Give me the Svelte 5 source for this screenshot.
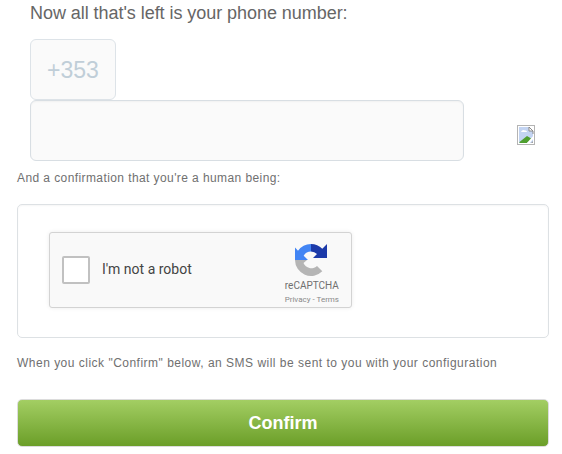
<script>
    let phone = "";
</script>

<div class="page">
    <h2 class="title">Now all that's left is your phone number:</h2>

    <div class="phone-group">
        <div class="prefix">+353</div>
        <div class="phone-row">
            <input class="phone-input" type="text" name="phone" bind:value={phone} />
            <svg class="broken-img" width="18" height="20" viewBox="0 0 18 20">
                <rect x="0.5" y="0.5" width="17" height="19" fill="#fff" stroke="#b4b4b4" />
                <path d="M2 2h10l4 4v12H2z" fill="#c3d4f2" />
                <path d="M4 7c.6-1.800 2.800-2.600 4-1.400 1.200 0 2 .7 2 1.400z" fill="#fff" />
                <path d="M2.500 18v-1l7.500-6 5 3-5 4z" fill="#4f9f2f" />
                <path d="M12 2v4h4z" fill="#fff" />
                <path d="M12 2v4h4M12 2l4 4v3" fill="none" stroke="#8a8a8a" />
                <path d="M9 19l8-9v3l-5 6z" fill="#fff" />
                <path d="M14 18l2-2v2z" fill="#a0a0a0" />
            </svg>
        </div>
    </div>

    <p class="note human">And a confirmation that you're a human being:</p>

    <div class="captcha-box">
        <div class="recaptcha">
            <span class="check"></span>
            <span class="robot">I'm not a robot</span>
            <div class="brand">
                <svg class="logo" width="32" height="32" viewBox="0 0 32 32">
                    <path d="M16 0a16 16 0 0 1 11.300 4.700L32 0v14H18l4-4a8.500 8.500 0 0 0-6-2.500z" fill="#1c3aa9" />
                    <path d="M16 0A16 16 0 0 0 3 6.800L0 3.500V16h13l-4.300-4.300A8.500 8.500 0 0 1 16 7.500z" fill="#4285f4" />
                    <path d="M0 16a16 16 0 0 0 27.300 11.300L22 22a8.500 8.500 0 0 1-13.500-3l3.500-3z" fill="#b5b5b5" />
                </svg>
                <span class="brand-name">reCAPTCHA</span>
                <span class="brand-links">Privacy - Terms</span>
            </div>
        </div>
    </div>

    <p class="note sms">When you click "Confirm" below, an SMS will be sent to you with your configuration</p>

    <button type="button" class="confirm">Confirm</button>
</div>

<style>
    :global(body) {
        margin: 0;
        background: #fff;
    }
    .page {
        width: 532px;
        padding: 0 13px 0 17px;
        font-family: "Liberation Sans", Arial, sans-serif;
    }
    .title {
        margin: 0;
        padding: 1px 0 0 13px;
        font-size: 18px;
        font-weight: normal;
        line-height: 24px;
        letter-spacing: -0.05px;
        color: #666;
    }
    .phone-group {
        margin-top: 14px;
        padding-left: 13px;
    }
    .prefix {
        box-sizing: border-box;
        width: 86px;
        height: 61px;
        line-height: 61px;
        text-align: center;
        font-size: 23px;
        color: #c0ced8;
        background: #fafafa;
        border: 1px solid #dde3e8;
        border-radius: 6px;
    }
    .phone-row {
        display: flex;
        align-items: center;
    }
    .phone-input {
        box-sizing: border-box;
        display: block;
        width: 434px;
        height: 61px;
        padding: 0 10px;
        background: #fafafa;
        border: 1px solid #d8dee3;
        border-radius: 6px;
        box-shadow: inset 0 1px 2px rgba(0, 0, 0, 0.04);
    }
    .broken-img {
        margin: 9px 0 0 53px;
    }
    .note {
        margin: 0;
        font-size: 12px;
        line-height: 16px;
        color: #707070;
    }
    .human {
        margin-top: 9px;
        letter-spacing: 0.41px;
    }
    .captcha-box {
        box-sizing: border-box;
        height: 134px;
        margin-top: 18px;
        padding: 27px 31px;
        border: 1px solid #dde1e4;
        border-radius: 5px;
        box-shadow: inset 0 1px 2px rgba(0, 0, 0, 0.04);
    }
    .recaptcha {
        box-sizing: border-box;
        display: flex;
        align-items: center;
        width: 303px;
        height: 76px;
        padding: 0 12px;
        background: #f9f9f9;
        border: 1px solid #d3d3d3;
        border-radius: 3px;
        box-shadow: 0 0 4px rgba(0, 0, 0, 0.08);
        font-family: Roboto, "Liberation Sans", sans-serif;
    }
    .check {
        box-sizing: border-box;
        width: 28px;
        height: 28px;
        background: #fff;
        border: 2px solid #c1c1c1;
        border-radius: 2px;
    }
    .robot {
        margin: 0 0 2px 12px;
        font-size: 14px;
        color: #444;
    }
    .brand {
        display: flex;
        flex-direction: column;
        align-items: center;
        margin-left: auto;
        padding: 9px 0 1px;
    }
    .logo {
        display: block;
        margin-right: 2px;
    }
    .brand-name {
        margin-top: 4px;
        font-size: 10px;
        line-height: 12px;
        color: #707070;
    }
    .brand-links {
        margin-top: 3px;
        font-size: 8px;
        line-height: 10px;
        color: #8a8a8a;
    }
    .sms {
        margin-top: 17px;
        letter-spacing: 0.49px;
    }
    .confirm {
        display: block;
        box-sizing: border-box;
        width: 532px;
        height: 48px;
        margin-top: 28px;
        padding: 0;
        font-family: inherit;
        font-size: 18px;
        font-weight: bold;
        color: #fff;
        background: linear-gradient(#a3ce63, #6b9e28);
        border: 1px solid #dcdcdc;
        border-radius: 5px;
    }
</style>
